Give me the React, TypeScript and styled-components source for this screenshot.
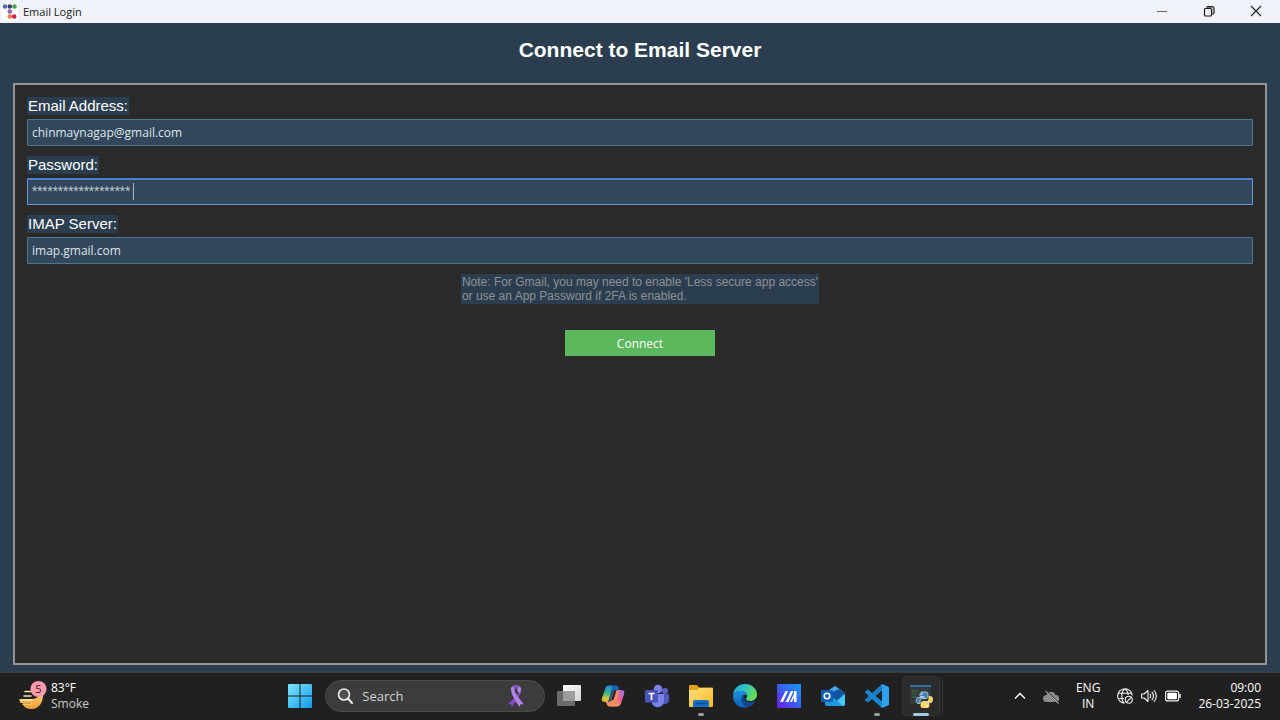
import React from "react";
import styled, { createGlobalStyle, css } from "styled-components";

const uiFont = `"Open Sans", "Noto Sans", sans-serif`;
const formFont = `"Liberation Sans", Arial, sans-serif`;

const GlobalStyle = createGlobalStyle`
  *, *::before, *::after { box-sizing: border-box; }
  body { margin: 0; background: #2b3e50; font-family: ${uiFont}; }
  button, input { font: inherit; color: inherit; }
  button { border: 0; padding: 0; background: none; }
  svg { display: block; flex: none; }
`;

const Desktop = styled.div`
  display: flex;
  flex-direction: column;
  min-height: 100vh;
`;

const TitleBar = styled.header`
  display: flex;
  align-items: center;
  height: 23px;
  padding: 0 1px 0 2px;
  background: #f0f3f9;
  color: #1a1a1a;
`;

const WindowTitle = styled.span`
  flex: 1;
  padding-left: 5px;
  font-size: 11px;
  line-height: 16px;
`;

const WindowButton = styled.button`
  display: grid;
  place-items: center;
  width: 47px;
  height: 23px;
  padding-bottom: 1px;
`;

const Content = styled.main`
  display: flex;
  flex: 1;
  flex-direction: column;
  padding: 0 13px 7px;
  background: #2b3e50;
  font-family: ${formFont};
`;

const Heading = styled.h1`
  margin: 0;
  padding: 14px 0 20px;
  color: #fff;
  font-size: 21px;
  line-height: 26px;
  text-align: center;
`;

const Panel = styled.form`
  display: flex;
  flex: 1;
  flex-direction: column;
  gap: 10px;
  padding: 12px;
  border: 2px solid #8f9792;
  background: #2a2a2a;
`;

const Field = styled.div`
  display: flex;
  flex-direction: column;
  align-items: flex-start;
  gap: 4px;
`;

const FieldLabel = styled.label`
  padding: 0 1px;
  background: #2b3e50;
  color: #fff;
  font-size: 15px;
  line-height: 18px;
`;

const InputWrap = styled.div`
  position: relative;
  width: 100%;
`;

const Input = styled.input<{ $active?: boolean; $masked?: boolean }>`
  display: block;
  width: 100%;
  height: 27px;
  padding: 0 4px;
  border: 1px solid #4f7590;
  border-radius: 1px;
  outline: 0;
  background: #32475b;
  color: #dfe6ec;
  font-family: ${uiFont};
  font-size: 12px;
  ${(p) =>
    p.$active &&
    css`
      border-color: #5f97cf;
      border-top: 2px solid #4a7fd0;
    `}
  ${(p) =>
    p.$masked &&
    css`
      padding-bottom: 3px;
      color: #b9c3cc;
      font-family: Roboto, sans-serif;
    `}
`;

const Caret = styled.span`
  position: absolute;
  top: 5px;
  left: 106px;
  width: 1px;
  height: 17px;
  background: #a9b3bd;
`;

const Note = styled.p`
  align-self: center;
  margin: 0;
  padding: 1px;
  background: #2b3e50;
  color: #8c9196;
  font-size: 12px;
  line-height: 14px;
`;

const ConnectButton = styled.button`
  align-self: center;
  width: 150px;
  height: 26px;
  margin-top: 16px;
  background: #5cb85c;
  color: #fff;
  font-family: ${uiFont};
  font-size: 12px;
`;

const Taskbar = styled.footer`
  display: grid;
  grid-template-columns: 1fr auto 1.21fr;
  align-items: center;
  height: 48px;
  padding-bottom: 1px;
  border-top: 1px solid #3a3c3e;
  background: #202020;
  color: #fff;
  font-size: 12px;
  line-height: 16px;
`;

const Weather = styled.button`
  display: flex;
  align-items: center;
  gap: 4px;
  padding-left: 19px;
  text-align: left;
`;

const Lines = styled.span<{ $align: "left" | "center" | "right" }>`
  display: flex;
  flex-direction: column;
  text-align: ${(p) => p.$align};
`;

const Muted = styled.span`
  color: #c8c8c8;
`;

const Apps = styled.nav`
  display: flex;
  align-items: center;
`;

const AppButton = styled.button<{ $state?: "open" | "active" }>`
  position: relative;
  display: grid;
  place-items: center;
  width: 44px;
  height: 44px;
  ${(p) =>
    p.$state &&
    css`
      &::after {
        content: "";
        position: absolute;
        bottom: 2px;
        left: 50%;
        width: ${p.$state === "active" ? 16 : 6}px;
        height: 3px;
        border-radius: 2px;
        background: ${p.$state === "active" ? "#a5cbe2" : "#9a9a9a"};
        transform: translateX(-50%);
      }
    `}
`;

const ActiveTile = styled.span`
  display: grid;
  place-items: center;
  width: 38px;
  height: 40px;
  border: 1px solid #353535;
  border-radius: 5px;
  background: #2b2b2b;
  box-shadow: 2px 0 0 #232323, 3px 0 0 #333;
`;

const SearchBox = styled.label`
  display: flex;
  align-items: center;
  gap: 9px;
  width: 220px;
  height: 32px;
  margin: 0 2px 0 3px;
  padding: 0 16px 0 11px;
  border: 1px solid #4c4c4c;
  border-radius: 16px;
  background: #3c3c3c;
`;

const SearchInput = styled.input`
  flex: 1;
  min-width: 0;
  padding: 0;
  border: 0;
  outline: 0;
  background: none;
  font-size: 13px;
  &::placeholder {
    color: #d2d2d2;
    opacity: 1;
  }
`;

const Tray = styled.div`
  display: flex;
  align-items: center;
  justify-content: flex-end;
  gap: 17px;
  padding-right: 19px;
`;

const TrayButton = styled.button`
  display: flex;
  align-items: center;
  gap: 8px;
`;

const AppLogo = () => (
  <svg width="16" height="18" viewBox="0 0 16 18">
    <rect y="1" width="16" height="17" rx="1" fill="#fff" />
    <circle cx="3" cy="3.500" r="2.300" fill="#4472b8" />
    <circle cx="7.800" cy="3.500" r="2.300" fill="#3f3f72" />
    <circle cx="12.500" cy="3.500" r="2.300" fill="#49a541" />
    <circle cx="7.800" cy="8.500" r="2.300" fill="#9164ad" />
    <circle cx="7.800" cy="13.500" r="2.300" fill="#f07a55" />
    <circle cx="12.200" cy="13.500" r="2.300" fill="#d02450" />
  </svg>
);

const MinimizeIcon = () => (
  <svg width="12" height="12" viewBox="0 0 12 12">
    <path d="M1 6.500h10" stroke="#666" />
  </svg>
);

const RestoreIcon = () => (
  <svg width="12" height="12" viewBox="0 0 12 12" fill="none" stroke="#1f1f1f">
    <rect x="1.500" y="3.500" width="7" height="7.500" rx="1" strokeWidth="1.200" />
    <path d="M3.500 2.500 4.500 1.500H9q2 0 2 2V8L9.500 9.500" strokeWidth="1.200" />
    <path d="M4 2.500h5q1 0 1 1V9" stroke="#777" />
  </svg>
);

const CloseIcon = () => (
  <svg width="12" height="12" viewBox="0 0 12 12">
    <path d="m1 1 10 10M11 1 1 11" stroke="#1f1f1f" strokeWidth="1.100" />
  </svg>
);

const WeatherIcon = () => (
  <svg width="28" height="30" viewBox="0 0 28 30">
    <defs>
      <linearGradient id="bowl" x1="0" y1="0" x2="0" y2="1">
        <stop offset="0" stopColor="#f7d57c" />
        <stop offset="1" stopColor="#f09a2e" />
      </linearGradient>
    </defs>
    <path d="M1 18h12c5 0 7-3 11-7 1 10-4 17-11 17-5 0-8-2-9.500-5H12v-1H1z" fill="url(#bowl)" />
    <path d="M6 10.500h6M5 15h7M1 19h12" stroke="#f6e3ad" strokeWidth="1.600" strokeLinecap="round" />
    <path d="M4 23h9" stroke="#f9cf75" strokeWidth="1.400" strokeLinecap="round" />
    <circle cx="19.500" cy="8" r="8" fill="#ff9aac" />
    <text x="19.500" y="12" textAnchor="middle" fontSize="11" fill="#3a1820">5</text>
  </svg>
);

const StartIcon = () => (
  <svg width="24" height="24" viewBox="0 0 24 24">
    <defs>
      <linearGradient id="start" x1="0" y1="0" x2="1" y2="1">
        <stop offset="0" stopColor="#7fe6fb" />
        <stop offset="1" stopColor="#1199ee" />
      </linearGradient>
    </defs>
    <path d="M1 0h10.500v11.500H0V1q0-1 1-1zM12.500 0H23q1 0 1 1v10.500H12.500zM0 12.500h11.500V24H1q-1 0-1-1zM12.500 12.500H24V23q0 1-1 1H12.500z" fill="url(#start)" />
  </svg>
);

const SearchIcon = () => (
  <svg width="16" height="16" viewBox="0 0 16 16" fill="none" stroke="#eee">
    <circle cx="7" cy="6.500" r="5.500" strokeWidth="1.600" fill="#505050" />
    <path d="m11 10.500 4 4.500" strokeWidth="2" strokeLinecap="round" />
  </svg>
);

const RibbonIcon = () => (
  <svg width="24" height="24" viewBox="0 0 24 24">
    <path d="M12.500 12 17 4.500c1 3-1 6-3 9L8 23l-1.200-3-3.300.5z" fill="#8647c5" />
    <path d="M7 5c0-5 10-5 10 0 0 1.500-.5 3-1.200 4.200L13.200 7c1.500-4.500-4-4.500-2.500 0 .8 2.500 3 5.500 9.300 13.500l-3.200-.5-1.300 3C11 16.500 7 10 7 5z" fill="#b283ea" />
    <path d="M8.500 2.500C10 .8 14 .8 15.500 2.500L13.200 4.800Q12 3.500 10.800 4.800z" fill="#8350bd" />
  </svg>
);

const TaskViewIcon = () => (
  <svg width="24" height="24" viewBox="0 0 24 24">
    <defs>
      <linearGradient id="pane" x1="0" y1="0" x2="1" y2="1">
        <stop offset="0" stopColor="#fff" />
        <stop offset="1" stopColor="#d4d4d4" />
      </linearGradient>
    </defs>
    <rect x="6" y="1" width="18" height="16" rx="1" fill="url(#pane)" />
    <rect x="0" y="7" width="18" height="15" rx="1" fill="#6b6b6b" />
    <path d="M6 7h12v10H7q-1 0-1-1z" fill="#9d9d9d" />
  </svg>
);

const CopilotIcon = () => (
  <svg width="24" height="24" viewBox="0 0 24 24">
    <defs>
      <linearGradient id="copA" x1="0.300" y1="0" x2="0.300" y2="1">
        <stop offset="0" stopColor="#1f8ee0" />
        <stop offset="0.450" stopColor="#34b48e" />
        <stop offset="0.750" stopColor="#c8c83a" />
        <stop offset="1" stopColor="#f0a83c" />
      </linearGradient>
      <linearGradient id="copB" x1="0.700" y1="0" x2="0.300" y2="1">
        <stop offset="0" stopColor="#b06ae0" />
        <stop offset="0.500" stopColor="#ec6295" />
        <stop offset="1" stopColor="#f8a05c" />
      </linearGradient>
    </defs>
    <path d="M11 22.500h5c2 0 3.200-1 4-3.200l3-9C23.900 7.500 22.800 6 20 6h-3.500z" fill="url(#copB)" />
    <path d="M8 22.500h4c1.600 0 2.200-1 2.800-3l3.700-13H15c-2 0-2.500 1-3 2.500L9 18H5c1 2.800 1.500 4.500 3 4.500z" fill="#f5905a" />
    <path d="M7.500 1.500C5.600 1.500 4.800 2.700 4 5.200L1 14C.2 16.800 1.200 18 4 18h3.200L12 1.500z" fill="url(#copA)" />
    <path d="M8 1.500h7.500c1.400 0 2 1.200 2.500 4.500h-3.200c-2 0-2.500 1-3 2.500L9 18H5.500c2 0 2.500-1.200 3-2.800L11 6c.5-2 0-4.500-3-4.500z" fill="#1b60c4" />
    <path d="M12.500 8.500 10 16.500c1.500 0 2.500-.5 3-2l2.300-8C13.500 6.300 12.900 7 12.500 8.500z" fill="#202020" />
  </svg>
);

const TeamsIcon = () => (
  <svg width="26" height="24" viewBox="0 0 26 24">
    <circle cx="21" cy="7" r="3" fill="#5b62c3" />
    <path d="M17 10h7q1 0 1 1v5c0 5-7 5-8 1z" fill="#5259ba" />
    <circle cx="14" cy="5" r="4.300" fill="#7b83eb" />
    <path d="M8 10h12v7c0 8-12 8-12 1z" fill="#7b83eb" />
    <rect x="1" y="6" width="13" height="12.500" rx="1" fill="#4b53bc" />
    <path d="M4.500 9.500h6M7.500 9.500V16" stroke="#fff" strokeWidth="1.700" />
  </svg>
);

const FolderIcon = () => (
  <svg width="24" height="24" viewBox="0 0 24 24">
    <defs>
      <linearGradient id="folder" x1="0" y1="0" x2="1" y2="1">
        <stop offset="0" stopColor="#ffe082" />
        <stop offset="1" stopColor="#f8b91f" />
      </linearGradient>
    </defs>
    <path d="M0 2q0-1 1-1h7l2 2.500h13q1 0 1 1V12H0z" fill="#e5a01a" />
    <path d="M0 6h8l2-2h13q1 0 1 1v17q0 1-1 1H1q-1 0-1-1z" fill="url(#folder)" />
    <path d="M4 23v-5q0-2 2-2h12q2 0 2 2v5z" fill="#1271c4" />
    <path d="M7 19.500h10" stroke="#0b4c8f" strokeWidth="1.500" strokeLinecap="round" />
  </svg>
);

const EdgeIcon = () => (
  <svg width="24" height="24" viewBox="0 0 24 24">
    <defs>
      <linearGradient id="edgeTop" x1="0" y1="0" x2="1" y2="0.400">
        <stop offset="0" stopColor="#1ba4e6" />
        <stop offset="0.500" stopColor="#2cc3c8" />
        <stop offset="1" stopColor="#65dc57" />
      </linearGradient>
      <linearGradient id="edgeLow" x1="0" y1="0" x2="0" y2="1">
        <stop offset="0" stopColor="#2192df" />
        <stop offset="1" stopColor="#0c5fb4" />
      </linearGradient>
    </defs>
    <path d="M0 11C.5 4.500 5.500 0 12 0c7 0 12 5 12 10.500 0 4-3 6.500-6.500 6.500-3 0-4.500-1-4.500-2 0-.8 1.200-1.200 1.200-3.200C14.200 9 11.500 7 8 7 4 7 1 8.500 0 11z" fill="url(#edgeTop)" />
    <path d="M0 12c.5-3.500 4-5 7.500-5 4 0 6.600 2 6.700 4.500C13 10 8.500 10 8.500 15c0 4 3 7.500 7 8C7 26 0 20 0 12z" fill="url(#edgeLow)" />
    <path d="M11 11c-1.800.8-2.800 3-2.500 5 .5 4 3.500 6.500 7 7 3-1 5.200-2.800 6.700-5 .4-.7-.2-1-.8-.7C15.500 20 10.500 17 11 11z" fill="#124a91" />
  </svg>
);

const AsusIcon = () => (
  <svg width="24" height="24" viewBox="0 0 24 24">
    <defs>
      <linearGradient id="asus" x1="1" y1="0" x2="0" y2="1">
        <stop offset="0" stopColor="#149af5" />
        <stop offset="0.500" stopColor="#3b60f0" />
        <stop offset="1" stopColor="#6a1fe0" />
      </linearGradient>
    </defs>
    <rect width="24" height="24" fill="url(#asus)" />
    <path d="M3 18 8.500 7H11L6 18zM8.500 18 14 7h2.500l-5 11z" fill="#fff" />
    <path d="M17 7h2.500v11H17zM13 18l4-8v3.500L15 18z" fill="#fff" />
  </svg>
);

const OutlookIcon = () => (
  <svg width="24" height="24" viewBox="0 0 24 24">
    <path d="M4 9 14 2l10 7v11q0 2-2 2H6q-2 0-2-2z" fill="#1263b8" />
    <path d="m8 6 6-4 8 5.500L14 13z" fill="#4aa4e8" />
    <path d="m12 8 6-3 6 4-9 7-5-3z" fill="#1153a0" />
    <path d="M24 10v10q0 2-2 2H10z" fill="#4cc9f0" />
    <path d="m4 14 9 0 9 8H6q-2 0-2-2z" fill="#1e9be0" />
    <rect y="6" width="12" height="12" rx="1" fill="#0f5fb5" />
    <circle cx="6" cy="12" r="2.800" fill="none" stroke="#fff" strokeWidth="1.600" />
  </svg>
);

const CodeIcon = () => (
  <svg width="24" height="24" viewBox="0 0 24 24">
    <path d="M17 0v6.500L3 18.500 0 16.500v-1z" fill="#1b7cc4" />
    <path d="M17 24v-6.500L3 5.500 0 7.500v1z" fill="#1688d4" />
    <path d="m17 0 6 2.500q1 .5 1 1.500v16q0 1-1 1.500L17 24z" fill="#2ba3ee" />
  </svg>
);

const PythonIcon = () => (
  <svg width="24" height="24" viewBox="0 0 24 24">
    <rect x="1" y="1" width="21" height="19" fill="#33393c" />
    <path d="M1 2h21" stroke="#3583c5" strokeWidth="1.500" />
    <path d="M3 7h6M3 10h4M3 13h5" stroke="#3d7441" />
    <path d="M14 8c-3 0-3 1.500-3 3v1.500h4v1H9.500c-3 0-3 6 0 6H11V17c0-1.500 1-2.500 2.500-2.500H17c1 0 2-1 2-2V10c0-2-2-2-5-2z" fill="#3d7fb5" stroke="#cfe0ec" strokeWidth="0.800" />
    <path d="M17 24c3 0 3-1.500 3-3v-1.500h-4v-1h5.500c3 0 3-6 0-6H20V15c0 1.500-1 2.500-2.500 2.500H14c-1 0-2 1-2 2V22c0 2 2 2 5 2z" fill="#ffd657" stroke="#f7e5a0" strokeWidth="0.800" />
    <circle cx="13" cy="10" r="0.800" fill="#fff" />
    <circle cx="18" cy="22" r="0.800" fill="#fff" />
  </svg>
);

const ChevronIcon = () => (
  <svg width="12" height="12" viewBox="0 0 12 12">
    <path d="m1 8.500 5-5 5 5" fill="none" stroke="#fff" strokeWidth="1.400" />
  </svg>
);

const CloudOffIcon = () => (
  <svg width="16" height="16" viewBox="0 0 16 16">
    <path d="M3.500 14a3.500 3.500 0 0 1 0-7A4.700 4.700 0 0 1 12.500 7 3.500 3.500 0 0 1 13 14z" fill="#8c8c8c" />
    <path d="m3 2.500 12.500 13" stroke="#303030" strokeWidth="1.800" />
    <path d="m2.500 3 13 12.500" stroke="#d8d8d8" />
  </svg>
);

const GlobeIcon = () => (
  <svg width="16" height="16" viewBox="0 0 16 16" fill="none" stroke="#f2f2f2" strokeWidth="1.100">
    <path d="M7.500 15.300A7.300 7.300 0 1 1 15.200 7.500M7.500 15.300C3.800 13 3.800 3 8 .7c2 1.300 3 4 3.200 6.300M1.200 5.300h13.500M1.200 10.500h6" />
    <circle cx="11.800" cy="11.800" r="3.500" />
    <path d="m9.500 14.200 4.700-4.800" />
  </svg>
);

const SpeakerIcon = () => (
  <svg width="16" height="16" viewBox="0 0 16 16" fill="none" stroke="#f2f2f2" strokeWidth="1.100" strokeLinejoin="round" strokeLinecap="round">
    <path d="M.6 6v4h2.500L7 13.500v-11L3.100 6z" />
    <path d="M9 6q1.400 2 0 4M11 4.200q3 3.800 0 7.600M13.200 2.500q4.200 5.500 0 11" />
  </svg>
);

const BatteryIcon = () => (
  <svg width="16" height="16" viewBox="0 0 16 16">
    <rect x="0.600" y="3.100" width="13" height="9.800" rx="2" fill="none" stroke="#f2f2f2" strokeWidth="1.100" />
    <rect x="2.300" y="4.800" width="9.600" height="6.400" rx="1" fill="#fff" />
    <path d="M15 6.500v3" stroke="#f2f2f2" strokeWidth="1.500" strokeLinecap="round" />
  </svg>
);

type AppEntry = { name: string; Icon: React.FC; state?: "open" | "active" };

const apps: AppEntry[] = [
  { name: "Task view", Icon: TaskViewIcon },
  { name: "Copilot", Icon: CopilotIcon },
  { name: "Teams", Icon: TeamsIcon },
  { name: "File Explorer", Icon: FolderIcon, state: "open" },
  { name: "Edge", Icon: EdgeIcon },
  { name: "MyASUS", Icon: AsusIcon },
  { name: "Outlook", Icon: OutlookIcon },
  { name: "Visual Studio Code", Icon: CodeIcon, state: "open" },
  { name: "Python", Icon: PythonIcon, state: "active" },
];

export default function App() {
  return (
    <Desktop>
      <GlobalStyle />
      <TitleBar>
        <AppLogo />
        <WindowTitle>Email Login</WindowTitle>
        <WindowButton aria-label="Minimize"><MinimizeIcon /></WindowButton>
        <WindowButton aria-label="Restore"><RestoreIcon /></WindowButton>
        <WindowButton aria-label="Close"><CloseIcon /></WindowButton>
      </TitleBar>

      <Content>
        <Heading>Connect to Email Server</Heading>
        <Panel onSubmit={(e) => e.preventDefault()}>
          <Field>
            <FieldLabel htmlFor="email">Email Address:</FieldLabel>
            <InputWrap>
              <Input id="email" type="text" defaultValue="chinmaynagap@gmail.com" />
            </InputWrap>
          </Field>
          <Field>
            <FieldLabel htmlFor="password">Password:</FieldLabel>
            <InputWrap>
              <Input id="password" type="text" $active $masked defaultValue="*******************" />
              <Caret />
            </InputWrap>
          </Field>
          <Field>
            <FieldLabel htmlFor="server">IMAP Server:</FieldLabel>
            <InputWrap>
              <Input id="server" type="text" defaultValue="imap.gmail.com" />
            </InputWrap>
          </Field>
          <Note>
            Note: For Gmail, you may need to enable 'Less secure app access'
            <br />
            or use an App Password if 2FA is enabled.
          </Note>
          <ConnectButton type="submit">Connect</ConnectButton>
        </Panel>
      </Content>

      <Taskbar>
        <Weather>
          <WeatherIcon />
          <Lines $align="left">
            <span>83°F</span>
            <Muted>Smoke</Muted>
          </Lines>
        </Weather>
        <Apps>
          <AppButton aria-label="Start"><StartIcon /></AppButton>
          <SearchBox>
            <SearchIcon />
            <SearchInput type="search" placeholder="Search" aria-label="Search" />
            <RibbonIcon />
          </SearchBox>
          {apps.map(({ name, Icon, state }) => (
            <AppButton key={name} aria-label={name} $state={state}>
              {state === "active" ? <ActiveTile><Icon /></ActiveTile> : <Icon />}
            </AppButton>
          ))}
        </Apps>
        <Tray>
          <TrayButton aria-label="Show hidden icons"><ChevronIcon /></TrayButton>
          <TrayButton aria-label="OneDrive"><CloudOffIcon /></TrayButton>
          <TrayButton>
            <Lines $align="center">
              <span>ENG</span>
              <span>IN</span>
            </Lines>
          </TrayButton>
          <TrayButton aria-label="Network, volume, battery">
            <GlobeIcon />
            <SpeakerIcon />
            <BatteryIcon />
          </TrayButton>
          <TrayButton>
            <Lines $align="right">
              <span>09:00</span>
              <span>26-03-2025</span>
            </Lines>
          </TrayButton>
        </Tray>
      </Taskbar>
    </Desktop>
  );
}
